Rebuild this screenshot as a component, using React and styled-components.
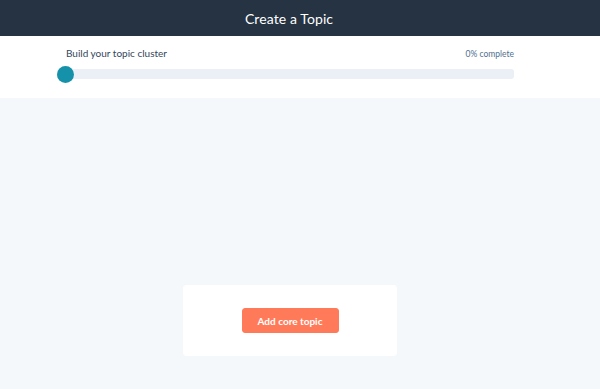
import React from "react";
import styled, { createGlobalStyle } from "styled-components";

const GlobalStyle = createGlobalStyle`
  html, body {
    margin: 0;
    padding: 0;
    background: #f5f8fa;
    font-family: Lato, "Open Sans", sans-serif;
  }
`;

function App() {
  const percent = 0;

  return (
    <Page>
      <GlobalStyle />
      <Header>
        <h1>Create a Topic</h1>
      </Header>
      <ProgressSection>
        <ProgressLabels>
          <span className="label">Build your topic cluster</span>
          <span className="percent">{percent}% complete</span>
        </ProgressLabels>
        <Track>
          <Fill style={{ width: `${percent}%` }} />
          <Knob />
        </Track>
      </ProgressSection>
      <Main>
        <Card>
          <Button>Add core topic</Button>
        </Card>
      </Main>
    </Page>
  );
}

const Page = styled.div`
  display: flex;
  flex-direction: column;
  min-height: 389px;
  background: #f5f8fa;
`;

const Header = styled.header`
  display: flex;
  align-items: center;
  justify-content: center;
  height: 36px;
  padding-right: 22px;
  background: #253342;
  h1 {
    margin: 0;
    font-size: 14px;
    font-weight: 400;
    color: #ffffff;
    letter-spacing: 0.1px;
  }
`;

const ProgressSection = styled.section`
  display: flex;
  flex-direction: column;
  gap: 8px;
  height: 62px;
  box-sizing: border-box;
  padding: 11px 86px 0 57px;
  background: #ffffff;
`;

const ProgressLabels = styled.div`
  display: flex;
  justify-content: space-between;
  align-items: baseline;
  padding-left: 9px;
  .label {
    font-size: 10px;
    color: #33475b;
  }
  .percent {
    font-size: 8.5px;
    color: #516f90;
  }
`;

const Track = styled.div`
  position: relative;
  height: 10px;
  margin-top: 2px;
  border-radius: 3px;
  background: #eaf0f6;
`;

const Fill = styled.div`
  height: 100%;
  border-radius: 3px;
  background: #0091ae;
`;

const Knob = styled.div`
  position: absolute;
  left: 0;
  top: 50%;
  width: 17px;
  height: 17px;
  margin-top: -8px;
  border-radius: 50%;
  background: #1592a9;
`;

const Main = styled.main`
  flex: 1;
  display: flex;
  justify-content: center;
  align-items: flex-start;
  padding: 187px 20px 0 0;
`;

const Card = styled.div`
  display: flex;
  align-items: center;
  justify-content: center;
  width: 214px;
  height: 71px;
  border-radius: 4px;
  background: #ffffff;
`;

const Button = styled.button`
  width: 97px;
  height: 25px;
  padding: 0;
  border: 1px solid #ff7a59;
  border-radius: 3px;
  background: #ff7a59;
  color: #ffffff;
  font-family: Lato, "Open Sans", sans-serif;
  font-size: 10px;
  font-weight: 700;
  cursor: pointer;
`;

export default App;
